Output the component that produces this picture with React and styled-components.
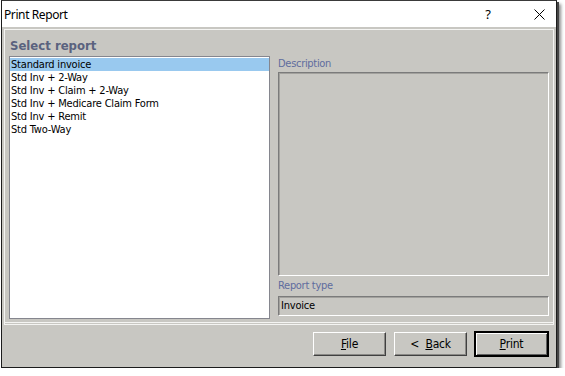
import styled, { createGlobalStyle } from "styled-components";

const reports = [
  "Standard invoice",
  "Std Inv + 2-Way",
  "Std Inv + Claim + 2-Way",
  "Std Inv + Medicare Claim Form",
  "Std Inv + Remit",
  "Std Two-Way",
];

export default function App() {
  return (
    <>
      <GlobalStyle />
      <Window>
        <TitleBar>
          <Title>Print Report</Title>
          <TitleButtons>
            <HelpMark>?</HelpMark>
            <CloseIcon viewBox="0 0 11 11" aria-label="Close">
              <path d="M0.5 0.5 L10.5 10.5 M10.5 0.5 L0.5 10.5" />
            </CloseIcon>
          </TitleButtons>
        </TitleBar>
        <Body>
          <Frame>
            <LeftColumn>
              <Heading>Select report</Heading>
              <ReportList>
                {reports.map((name, i) => (
                  <ReportItem key={name} $selected={i === 0}>
                    {name}
                  </ReportItem>
                ))}
              </ReportList>
            </LeftColumn>
            <RightColumn>
              <FieldLabel>Description</FieldLabel>
              <DescriptionBox />
              <FieldLabel $tall>Report type</FieldLabel>
              <TypeBox>Invoice</TypeBox>
            </RightColumn>
          </Frame>
          <ButtonRow>
            <Button>
              <u>F</u>ile
            </Button>
            <Button>
              &lt;&nbsp;&nbsp;<u>B</u>ack
            </Button>
            <Button $default>
              <u>P</u>rint
            </Button>
          </ButtonRow>
        </Body>
      </Window>
    </>
  );
}

const uiFont = `"DejaVu Sans Condensed", "DejaVu Sans", sans-serif`;

const GlobalStyle = createGlobalStyle`
  body {
    margin: 0;
    background: #ffffff;
    font-family: ${uiFont};
  }
`;

const Window = styled.div`
  margin-left: 1px;
  width: 556px;
  height: 368px;
  box-sizing: border-box;
  border: 1px solid #1c1c1c;
  border-top-color: #3a3a3a;
  background: #c8c7c2;
  display: flex;
  flex-direction: column;
  box-shadow: 2px 2px 0 #444, 4px 4px 3px rgba(0, 0, 0, 0.45);
`;

const TitleBar = styled.div`
  height: 26px;
  flex: none;
  background: #ffffff;
  display: flex;
  align-items: center;
  justify-content: space-between;
  padding: 0 0 0 2px;
`;

const Title = styled.span`
  font-family: "Noto Sans", "Open Sans", sans-serif;
  font-size: 12px;
  letter-spacing: -0.4px;
  color: #000;
`;

const TitleButtons = styled.div`
  display: flex;
  align-items: center;
  gap: 43px;
  padding-right: 11px;
`;

const HelpMark = styled.span`
  font-family: "Noto Sans", sans-serif;
  font-size: 13px;
  color: #000;
`;

const CloseIcon = styled.svg`
  width: 11px;
  height: 11px;
  stroke: #000;
  stroke-width: 1;
  fill: none;
`;

const Body = styled.div`
  flex: 1;
  display: flex;
  flex-direction: column;
  padding: 2px 2px 0 2px;
`;

const Frame = styled.div`
  display: flex;
  gap: 8px;
  padding: 7px 4px 3px 4px;
  border: 1px solid #f4f4f2;
  border-bottom: 3px double #f4f4f2;
`;

const LeftColumn = styled.div`
  width: 262px;
  display: flex;
  flex-direction: column;
`;

const Heading = styled.div`
  font-size: 13px;
  font-weight: bold;
  line-height: 17px;
  color: #5a627e;
  padding-left: 1px;
  margin-bottom: 2px;
`;

const ReportList = styled.div`
  height: 263px;
  box-sizing: border-box;
  background: #ffffff;
  border: 1px solid #85868e;
  padding: 1px 0 0 0;
`;

const ReportItem = styled.div`
  font-size: 11px;
  letter-spacing: -0.2px;
  line-height: 13px;
  height: 13px;
  padding-left: 1px;
  color: #000;
  background: ${(p) => (p.$selected ? "#99c9ef" : "transparent")};
`;

const RightColumn = styled.div`
  width: 272px;
  display: flex;
  flex-direction: column;
  padding-top: 19px;
`;

const FieldLabel = styled.div`
  font-size: 11px;
  letter-spacing: -0.3px;
  line-height: ${(p) => (p.$tall ? "20px" : "16px")};
  height: ${(p) => (p.$tall ? "20px" : "16px")};
  color: #5f6c9e;
`;

const SunkenBox = styled.div`
  box-sizing: border-box;
  border: 1px solid;
  border-color: #7b7b7b #ffffff #ffffff #7b7b7b;
  box-shadow: inset 1px 1px 0 #a2a19d;
  background: #c8c7c2;
`;

const DescriptionBox = styled(SunkenBox)`
  height: 204px;
`;

const TypeBox = styled(SunkenBox)`
  height: 20px;
  font-size: 11px;
  letter-spacing: -0.2px;
  line-height: 18px;
  padding-left: 2px;
  color: #000;
`;

const ButtonRow = styled.div`
  display: flex;
  justify-content: flex-end;
  gap: 8px;
  padding: 7px 6px 0 0;
`;

const Button = styled.button`
  width: 73px;
  height: 24px;
  box-sizing: border-box;
  font-family: ${uiFont};
  font-size: 12px;
  letter-spacing: -0.2px;
  color: #000;
  background: #c8c7c2;
  border: 1px solid;
  border-color: #ffffff #404040 #404040 #ffffff;
  box-shadow: inset -1px -1px 0 #8a8986;
  padding: 0;
  ${(p) =>
    p.$default &&
    `
    outline: 1px solid #000;
    outline-offset: 0;
    border: 1px solid #000;
    box-shadow: inset 1px 1px 0 #ffffff, inset -1px -1px 0 #606060;
  `}
`;
